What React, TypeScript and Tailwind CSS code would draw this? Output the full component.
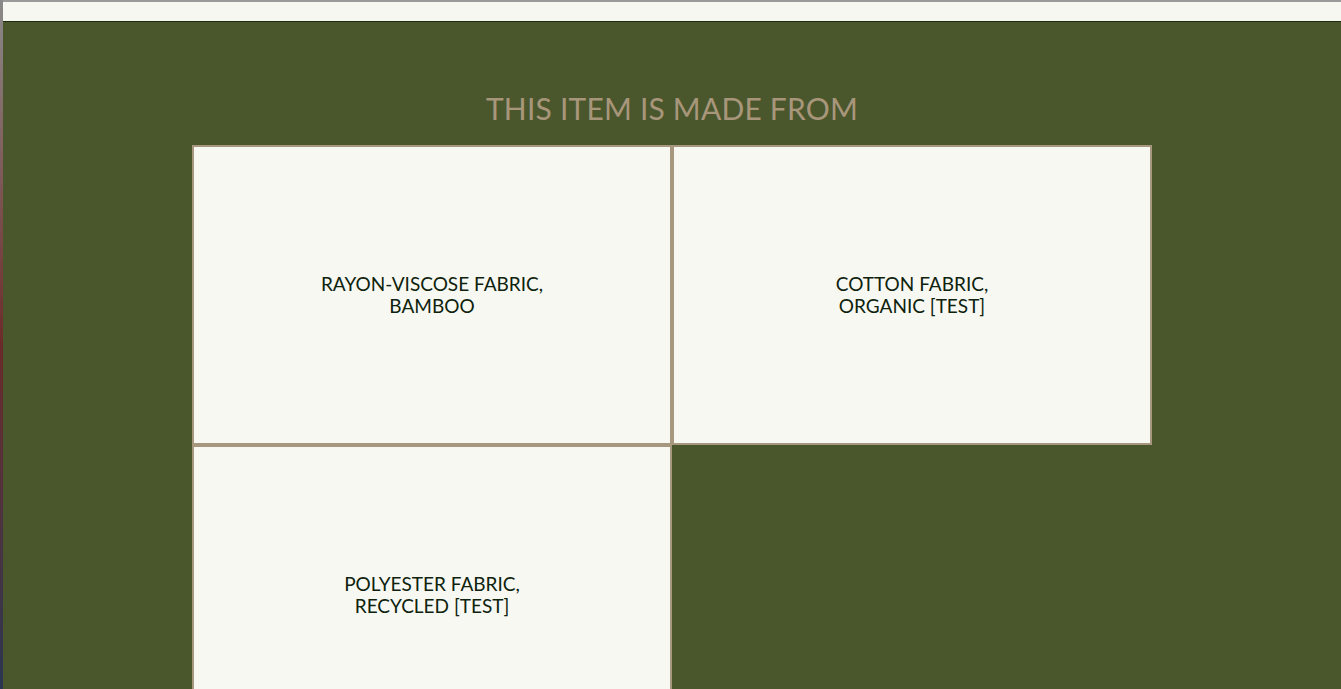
const materials = [
  ['RAYON-VISCOSE FABRIC,', 'BAMBOO'],
  ['COTTON FABRIC,', 'ORGANIC [TEST]'],
  ['POLYESTER FABRIC,', 'RECYCLED [TEST]'],
]

export default function App() {
  return (
    <div className="flex h-[689px] overflow-hidden bg-[#4a572d] font-['Lato',sans-serif]">
      <div className="w-[3px] shrink-0 bg-gradient-to-b from-[#8a8a8a] via-[#6b2a2a] to-[#2a3550]" />
      <div className="flex min-w-0 flex-1 flex-col">
        <div className="h-[2px] shrink-0 bg-[#9a9a9a]" />
        <div className="h-[20px] shrink-0 border-b border-[#1c2a0e] bg-[#f7f7f2]" />
        <section className="flex shrink-0 flex-col items-center pt-[66px]">
          <h2 className="text-[30px] leading-[40px] font-normal tracking-[0.2px] text-[#a8967b]">
            THIS ITEM IS MADE FROM
          </h2>
          <div className="mt-[17px] grid w-[960px] grid-cols-2">
            {materials.map((lines) => (
              <div
                key={lines[0]}
                className="flex h-[300px] flex-col items-center justify-center border-2 border-[#a8977f] bg-[#f7f8f2] text-center text-[19px] leading-[22px] text-[#0e220d]"
              >
                <span>{lines[0]}</span>
                <span>{lines[1]}</span>
              </div>
            ))}
          </div>
        </section>
      </div>
    </div>
  )
}
